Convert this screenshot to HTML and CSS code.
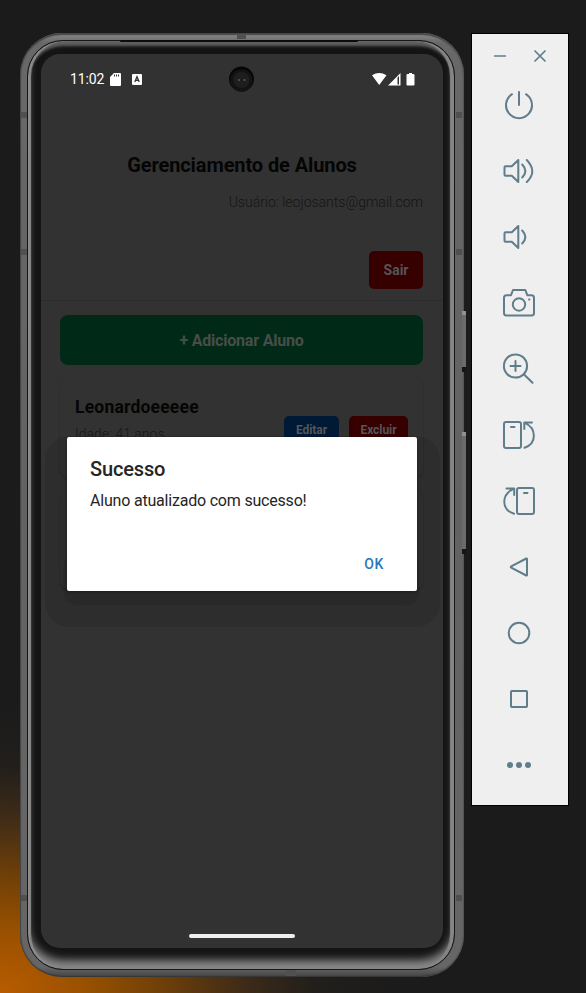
FILE: index.html
```html
<!DOCTYPE html>
<html lang="pt-BR">
<head>
<meta charset="utf-8">
<title>Gerenciamento de Alunos</title>
<link rel="stylesheet" href="styles.css">
</head>
<body>
<main class="desktop">
  <div class="phone">
    <i class="band band-top"></i><i class="band band-bottom"></i>
    <i class="band band-l1"></i><i class="band band-l2"></i><i class="band band-l3"></i>
    <i class="band band-r1"></i><i class="band band-r2"></i><i class="band band-r3"></i>
    <i class="key key-power"></i><i class="key key-volume"></i>
    <div class="rim">
      <i class="speaker"></i>
      <div class="screen">
        <div class="status">
          <span class="clock">11:02</span>
          <svg class="sd" width="11" height="13" viewBox="0 0 11 13"><path fill="#fff" fill-rule="evenodd" d="M4 0h6q1 0 1 1v11q0 1-1 1H1q-1 0-1-1V4zM4 1.5v2h1v-2zm2 0v2h1v-2zm2 0v2h1v-2z"/></svg>
          <svg class="kb" width="10" height="11" viewBox="0 0 10 11"><rect width="10" height="11" rx="1" fill="#fff"/><path d="M2.8 8 5 2.7 7.2 8M3.5 6.3h3" fill="none" stroke="#333" stroke-width="1.3"/></svg>
          <svg class="signals" width="43" height="14" viewBox="0 0 43 14"><g fill="#fff"><path d="M0 3.300Q7.200-1.500 14.500 3.300L7.200 13z"/><path fill-rule="evenodd" d="M28.500 1v12.500H16zM25.500 5.500v7h1.500v-8.500z"/><path d="M37 1h3v1h1q1.500 0 1.500 1v9.500q0 1-1 1h-6q-1 0-1-1V3q0-1 1-1H37z"/></g></svg>
        </div>
        <div class="camera"><svg width="26" height="26" viewBox="0 0 26 26"><circle cx="12.500" cy="13" r="12.500" fill="#060606"/><circle cx="12.500" cy="14.500" r="11.200" fill="#131313"/><circle cx="12.500" cy="14" r="8" fill="#1e1e1e"/><path d="M10 13.200v1.600" stroke="#5b6030" stroke-width="2"/><path d="M15.500 13.200v1.600" stroke="#80563c" stroke-width="2"/></svg></div>
        <header class="header">
          <h1>Gerenciamento de Alunos</h1>
          <p class="user"><span>Usuário: leojosants@gmail.com</span></p>
          <span class="logout">Sair</span>
        </header>
        <section class="content">
          <div class="add"><span>+ Adicionar Aluno</span></div>
          <article class="card">
            <div class="info"><h2>Leonardoeeeee</h2><p>Idade: 41 anos</p></div>
            <div class="actions"><span class="edit">Editar</span><span class="delete">Excluir</span></div>
          </article>
          <article class="card"></article>
        </section>
        <i class="shade"></i><i class="shade-near"></i>
        <div class="dialog">
          <h3><span>Sucesso</span></h3>
          <p><span>Aluno atualizado com sucesso!</span></p>
          <span class="ok">OK</span>
        </div>
        <i class="home"></i>
      </div>
    </div>
  </div>
  <aside class="toolbar">
    <div class="window">
      <svg width="12" height="12" viewBox="0 0 12 12"><path d="M.7 6h10.600"/></svg>
      <svg width="12" height="12" viewBox="0 0 12 12"><path d="m1 1 10 10M11 1 1 11"/></svg>
    </div>
    <svg class="tool" viewBox="0 0 36 36"><path d="M18 5v13M11 7.200a13 13 0 1 0 14 0"/></svg>
    <svg class="tool" viewBox="0 0 36 36"><path d="M17.300 7v22l-6.500-6.200H4.500q-1 0-1-1v-7.600q0-1 1-1h6.300zM21.200 11.500q6.300 6.500 0 13M25.800 7q11 11.500 0 22"/></svg>
    <svg class="tool" viewBox="0 0 36 36"><path d="M17.300 7v22l-6.500-6.200H4.500q-1 0-1-1v-7.600q0-1 1-1h6.300zM21.200 11.500q6.300 6.500 0 13"/></svg>
    <svg class="tool" viewBox="0 0 36 36"><path d="M12 5h12.300l2 5.200h4.200q2.500 0 2.500 2.500V28q0 2.500-2.500 2.500h-25Q3 30.500 3 28V12.700q0-2.500 2.500-2.500H10z"/><circle cx="18" cy="19.500" r="6.200"/><path d="M28 14.500h.4"/></svg>
    <svg class="tool" viewBox="0 0 36 36"><circle cx="14.500" cy="15" r="11.600"/><path d="M14.500 10v10M9.500 15h10M22.800 23.300l8.700 8.500"/></svg>
    <svg class="tool" viewBox="0 0 36 36"><rect x="3" y="5" width="17" height="26" rx="2"/><path d="M10 10h3.500M31 5.500h-7.700v6.500M23.500 5.700C36 11.500 36 26.500 23.500 30.800"/></svg>
    <svg class="tool" viewBox="0 0 36 36"><rect x="16" y="5" width="17" height="26" rx="2"/><path d="M23 10h3.500M5.500 5.500h7.700v6.500M13 5.700C0 11.500 0 26.500 13 30.800"/></svg>
    <svg class="tool" viewBox="0 0 36 36"><path d="M25.300 9.500Q26 9.200 26 10v16q0 .8-.7.500L10.200 18.600q-.9-.6 0-1.200z"/></svg>
    <svg class="tool" viewBox="0 0 36 36"><circle cx="18" cy="18" r="10.300"/></svg>
    <svg class="tool" viewBox="0 0 36 36"><rect x="10" y="10" width="16" height="16" rx=".8"/></svg>
    <svg class="tool dots" viewBox="0 0 36 36"><circle cx="9" cy="18" r="3"/><circle cx="18" cy="18" r="3"/><circle cx="27" cy="18" r="3"/></svg>
  </aside>
</main>
</body>
</html>
```

FILE: styles.css
```css
* { box-sizing: border-box; }
body, h1, h2, h3, p { margin: 0; }
body { font-family: Roboto, "Liberation Sans", sans-serif; background: #1b1b1b; }
i { display: block; }
.desktop {
  display: flex;
  align-items: flex-start;
  width: 586px;
  height: 993px;
  padding: 33px 0 0 20px;
  overflow: hidden;
  background: radial-gradient(ellipse 400px 290px at 0 993px, #b85c00 0%, #985000 22%, #704008 40%, #3c2a18 62%, #221f1b 78%, #1b1b1b 100%);
}

.phone {
  position: relative;
  width: 444px;
  height: 944px;
  padding: 7px 9px 7px 7px;
  border-radius: 42px;
  background: linear-gradient(#8a8a8a, #686868 10px, #626262 50%, #666 934px, #444);
  box-shadow: inset 1px 0 1px #444, inset -1px 0 1px #555, inset 0 2px 1px #484848, inset 0 -1px 1px #333;
}
.rim {
  position: relative;
  width: 428px;
  height: 930px;
  padding: 13px 12px 21px 13px;
  border: 1px solid #161616;
  border-radius: 36px;
  background: #141414;
  box-shadow: inset 3px 0 1px #8b8b8b, inset -4px 0 1px #858585, inset 0 5px 3px #5f5f5f, inset 0 -9px 9px #898989;
}
.speaker { position: absolute; left: 92px; top: -1px; width: 238px; height: 2px; background: #0c0c0c; border-radius: 2px; }
.band { position: absolute; background: #505050; }
.band-top { left: 217px; top: 1px; width: 9px; height: 5px; }
.band-bottom { left: 266px; bottom: 1px; width: 10px; height: 6px; }
.band-l1, .band-l2, .band-l3 { left: 1px; width: 6px; height: 6px; }
.band-r1, .band-r2, .band-r3 { right: 2px; width: 6px; height: 6px; }
.band-l1, .band-r1 { top: 79px; }
.band-l2, .band-r2 { top: 216px; }
.band-l3, .band-r3 { top: 862px; }
.key { position: absolute; right: -2px; width: 4px; background: #6b6b6b; border-top: 4px solid #909090; border-bottom: 5px solid #161616; }
.key-power { top: 278px; height: 61px; }
.key-volume { top: 399px; height: 122px; }

.screen {
  position: relative;
  width: 402px;
  height: 894px;
  overflow: hidden;
  border-radius: 19px;
  background: #323232;
}
.status { display: flex; align-items: center; height: 50px; padding: 0 28px 0 29px; color: #fff; }
.clock { width: 35px; font-size: 14px; letter-spacing: -.1px; white-space: nowrap; }
.sd { margin-left: 5px; }
.kb { margin-left: 11px; }
.signals { margin-left: auto; }
.camera { position: absolute; left: 188px; top: 12px; width: 26px; height: 26px; }
.camera svg { display: block; }

.header { display: flex; flex-direction: column; height: 197px; padding: 49px 20px 0; border-bottom: 1px solid #2c2c2c; }
.header h1 { height: 24px; font-size: 20px; line-height: 25px; font-weight: 700; letter-spacing: -.1px; color: #050505; text-align: center; }
.user { height: 20px; margin-top: 15px; font-size: 14px; line-height: 21px; color: #151515; text-align: right; font-weight: 300; }
.logout { align-self: flex-end; width: 54px; height: 38px; margin-top: 39px; border-radius: 5px; background: #360000; color: #555; font-size: 14px; line-height: 39px; font-weight: 700; text-align: center; }
.content { display: flex; flex-direction: column; gap: 14px; padding: 14px 20px 0 19px; }
.add { height: 50px; border-radius: 8px; background: #002a17; color: #484d49; font-size: 16px; line-height: 52px; font-weight: 700; letter-spacing: -.2px; text-align: center; }
.card { display: flex; justify-content: space-between; height: 98px; padding: 16px 15px; border-radius: 8px; background: #323232; box-shadow: 0 1px 2px #292929; }
.info h2 { font-size: 17.500px; line-height: 25px; font-weight: 700; letter-spacing: .2px; color: #050505; }
.info p { margin-top: 4px; font-size: 14px; line-height: 20px; font-weight: 300; color: #171717; }
.actions { display: flex; gap: 10px; padding-top: 21px; color: #53575b; font-size: 12px; line-height: 29px; font-weight: 700; letter-spacing: -.05px; text-align: center; }
.actions span { height: 28px; border-radius: 5px; }
.edit { width: 55px; background: #001a35; }
.delete { width: 59px; background: #360000; }

.shade { position: absolute; left: 4px; top: 382px; width: 395px; height: 191px; border-radius: 24px; background: rgb(0 0 0 / 9%); }
.shade-near { position: absolute; left: 22px; top: 500px; width: 357px; height: 51px; border-radius: 14px; background: rgb(0 0 0 / 8%); }
.dialog { position: absolute; left: 25.500px; top: 383px; display: flex; flex-direction: column; width: 350.500px; height: 154px; padding: 20px 24px 0 23.500px; border-radius: 2px; background: #fff; color: #252525; box-shadow: 0 1px 3px rgb(0 0 0 / 35%); }
.dialog h3 { font-size: 20px; line-height: 24px; font-weight: 500; letter-spacing: -.15px; }
.dialog p { margin-top: 9px; font-size: 16px; line-height: 22px; letter-spacing: -.2px; }
.ok { align-self: flex-end; margin: 42px 9px 0 0; color: #2877b8; font-size: 14px; line-height: 20px; font-weight: 500; letter-spacing: .6px; }
.home { position: absolute; left: 148px; top: 880px; width: 106px; height: 4px; border-radius: 2px; background: #eee; }

.toolbar { display: flex; flex-direction: column; align-items: center; width: 98px; height: 773px; margin-left: 7px; padding-right: 2px; border: 1px solid #000; background: #efefef; }
.toolbar svg { flex: none; fill: none; stroke: #607d8b; stroke-width: 2; stroke-linecap: round; stroke-linejoin: round; }
.toolbar .window { display: flex; flex: none; gap: 28px; height: 53px; margin-right: -2px; padding-top: 16px; }
.toolbar .window svg { stroke-width: 1.700; }
.tool { width: 36px; height: 36px; margin-bottom: 30px; }
.toolbar .dots { margin-bottom: 0; fill: #607d8b; stroke: none; }
```
